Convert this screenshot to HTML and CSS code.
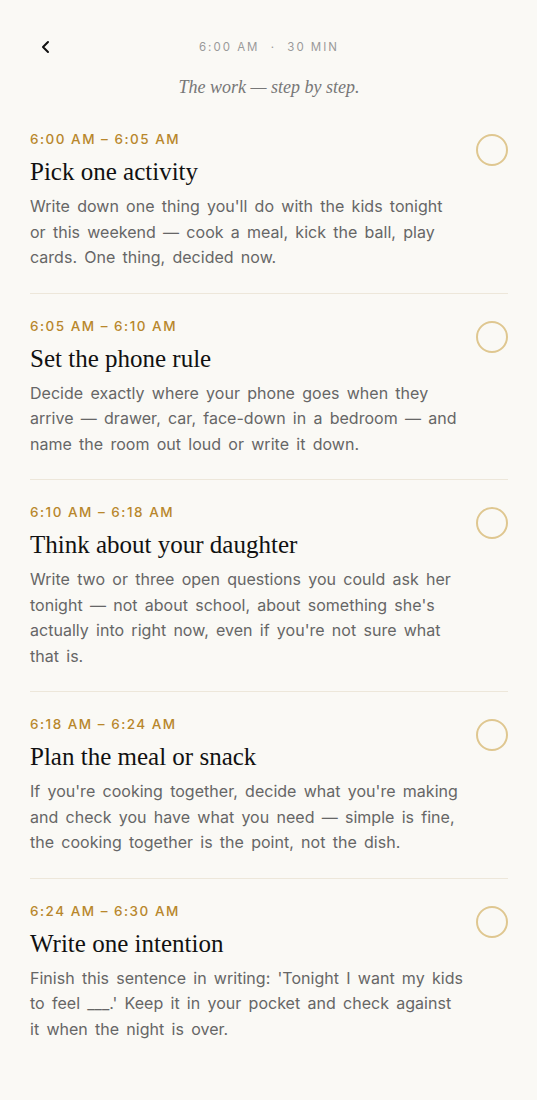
FILE: index.html
```html
<!DOCTYPE html>
<html lang="en">
<head>
<meta charset="utf-8">
<title>The work</title>
<link rel="stylesheet" href="styles.css">
</head>
<body>
<div class="page">
  <header class="topbar">
    <button class="back" aria-label="Back">
      <svg width="14" height="14" viewBox="0 0 14 14"><path d="M9 2 L4 7 L9 12" fill="none" stroke="#111" stroke-width="2" stroke-linecap="round" stroke-linejoin="round"/></svg>
    </button>
    <div class="meta">6:00 AM <span class="dot">·</span> 30 MIN</div>
  </header>
  <p class="subtitle">The work — step by step.</p>

  <ol class="steps">
    <li class="step">
      <div class="step-text">
        <div class="time">6:00 AM – 6:05 AM</div>
        <h2 class="title">Pick one activity</h2>
        <p class="body">Write down one thing you'll do with the kids tonight or this weekend — cook a meal, kick the ball, play cards. One thing, decided now.</p>
      </div>
      <span class="check"></span>
    </li>
    <li class="step">
      <div class="step-text">
        <div class="time">6:05 AM – 6:10 AM</div>
        <h2 class="title">Set the phone rule</h2>
        <p class="body">Decide exactly where your phone goes when they arrive — drawer, car, face-down in a bedroom — and name the room out loud or write it down.</p>
      </div>
      <span class="check"></span>
    </li>
    <li class="step">
      <div class="step-text">
        <div class="time">6:10 AM – 6:18 AM</div>
        <h2 class="title">Think about your daughter</h2>
        <p class="body">Write two or three open questions you could ask her tonight — not about school, about something she's actually into right now, even if you're not sure what that is.</p>
      </div>
      <span class="check"></span>
    </li>
    <li class="step">
      <div class="step-text">
        <div class="time">6:18 AM – 6:24 AM</div>
        <h2 class="title">Plan the meal or snack</h2>
        <p class="body">If you're cooking together, decide what you're making and check you have what you need — simple is fine, the cooking together is the point, not the dish.</p>
      </div>
      <span class="check"></span>
    </li>
    <li class="step">
      <div class="step-text">
        <div class="time">6:24 AM – 6:30 AM</div>
        <h2 class="title">Write one intention</h2>
        <p class="body">Finish this sentence in writing: 'Tonight I want my kids to feel ___.' Keep it in your pocket and check against it when the night is over.</p>
      </div>
      <span class="check"></span>
    </li>
  </ol>
</div>
</body>
</html>
```

FILE: styles.css
```css
* { box-sizing: border-box; }
html, body { margin: 0; padding: 0; }
body {
  background: #faf9f5;
  font-family: "Inter", "DejaVu Sans", sans-serif;
  color: #666;
}
.page {
  padding: 0 29px 40px 30px;
}
.topbar {
  position: relative;
  height: 94px;
  padding-top: 38px;
  display: flex;
  justify-content: center;
}
.back {
  position: absolute;
  left: 6px;
  top: 38px;
  width: 20px;
  height: 18px;
  padding: 0;
  border: 0;
  background: none;
  display: flex;
  align-items: center;
  justify-content: center;
}
.meta {
  font-size: 11.5px;
  letter-spacing: 2px;
  color: #9a9a9a;
  line-height: 18px;
}
.meta .dot { margin: 0 6px; }
.subtitle {
  margin: -20px 0 0;
  text-align: center;
  font-family: "Liberation Serif", serif;
  font-style: italic;
  font-size: 18px;
  color: #777;
  line-height: 26px;
}
.steps {
  list-style: none;
  margin: 0;
  padding: 0;
  margin-top: 7px;
}
.step {
  display: flex;
  align-items: flex-start;
  gap: 11.4px;
  padding: 21px 0 22px;
  border-bottom: 1.5px solid #ede7da;
}
.step:last-child { border-bottom: 0; }
.step-text { flex: 1; }
.time {
  font-size: 13.5px;
  font-weight: 500;
  letter-spacing: 1.5px;
  color: #b8872c;
  line-height: 22px;
}
.title {
  margin: 7px 0 7px;
  font-family: "Liberation Serif", serif;
  font-weight: 400;
  font-size: 25px;
  line-height: 30px;
  color: #111;
}
.body {
  margin: 0;
  font-size: 16px;
  letter-spacing: 0.025px;
  word-spacing: 2.7px;
  line-height: 25.5px;
  color: #666;
}
.check {
  flex: none;
  width: 32px;
  height: 32px;
  border-radius: 50%;
  border: 2px solid #dfc790;
  margin-top: 6px;
}
```
